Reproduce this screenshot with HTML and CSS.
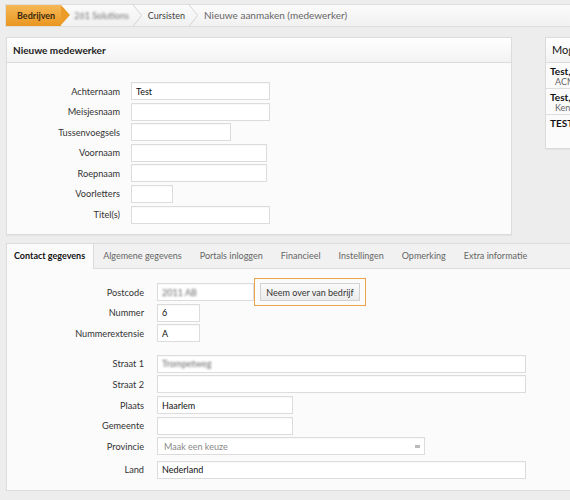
FILE: index.html
```html
<!DOCTYPE html>
<html lang="nl">
<head>
<meta charset="utf-8">
<title>Nieuwe medewerker</title>
<link rel="stylesheet" href="styles.css">
</head>
<body>
<div class="page">
  <nav class="crumbs">
    <a class="crumb crumb-home" href="#">Bedrijven</a>
    <a class="crumb crumb-blur" href="#">261 Solutions</a>
    <svg class="sep" viewBox="0 0 10 23" width="10" height="23"><polyline points="0.5,0 9.5,11.5 0.5,23" fill="none" stroke="#d4d4d4" stroke-width="1"/></svg>
    <a class="crumb" href="#">Cursisten</a>
    <svg class="sep" viewBox="0 0 10 23" width="10" height="23"><polyline points="0.5,0 9.5,11.5 0.5,23" fill="none" stroke="#d4d4d4" stroke-width="1"/></svg>
    <span class="crumb crumb-current">Nieuwe aanmaken (medewerker)</span>
  </nav>

  <div class="top">
    <section class="panel person">
      <header class="panel-head">Nieuwe medewerker</header>
      <div class="form person-form">
        <label>Achternaam</label><input class="w139" type="text" value="Test">
        <label>Meisjesnaam</label><input class="w139" type="text">
        <label>Tussenvoegsels</label><input class="w100" type="text">
        <label>Voornaam</label><input class="w136" type="text">
        <label>Roepnaam</label><input class="w136" type="text">
        <label>Voorletters</label><input class="w42" type="text">
        <label>Titel(s)</label><input class="w139" type="text">
      </div>
    </section>

    <aside class="panel matches">
      <header class="panel-head panel-head-light">Mogelijke dubbelen</header>
      <ul class="match-list">
        <li><b>Test, Jan</b><span>ACME Opleidingen</span></li>
        <li><b>Test, Piet</b><span>Kennisinstituut</span></li>
        <li><b>TEST, Karel</b><span></span></li>
      </ul>
    </aside>
  </div>

  <section class="panel tabs-panel">
    <ul class="tabs">
      <li class="active">Contact gegevens</li>
      <li>Algemene gegevens</li>
      <li>Portals inloggen</li>
      <li>Financieel</li>
      <li>Instellingen</li>
      <li>Opmerking</li>
      <li>Extra informatie</li>
    </ul>
    <div class="form contact-form">
      <label>Postcode</label>
      <div class="inline">
        <div class="fake-input w97"><span class="blurred">2011 AB</span></div>
        <div class="highlight"><button type="button" class="btn">Neem over van bedrijf</button></div>
      </div>
      <label>Nummer</label><input class="w43" type="text" value="6">
      <label>Nummerextensie</label><input class="w43" type="text" value="A">
      <div class="spacer"></div>
      <label>Straat 1</label><div class="fake-input w369"><span class="blurred">Trompetweg</span></div>
      <label>Straat 2</label><input class="w369" type="text">
      <label>Plaats</label><input class="w136" type="text" value="Haarlem">
      <label>Gemeente</label><input class="w136" type="text">
      <label>Provincie</label>
      <div class="select w268"><span>Maak een keuze</span><i class="caret"></i></div>
      <label class="land">Land</label><input class="w369 land" type="text" value="Nederland">
    </div>
  </section>
</div>
</body>
</html>
```

FILE: styles.css
```css
* { box-sizing: border-box; }

html, body {
  margin: 0;
  padding: 0;
  overflow: hidden;
}

body {
  background: #ededed;
  font-family: Lato, "Open Sans", "Liberation Sans", sans-serif;
  font-size: 9px;
  color: #333;
}

.page {
  width: 780px;
  padding: 4px 0 0 4px;
}

/* breadcrumb bar */
.crumbs {
  display: flex;
  align-items: center;
  height: 23px;
  margin-left: 1px;
  border: 1px solid #dedede;
  background: linear-gradient(#fbfbfb, #f1f1f1);
  overflow: hidden;
}

.crumb {
  color: #444;
  font-size: 9px;
  text-decoration: none;
  line-height: 21px;
}

.crumb-home {
  position: relative;
  height: 21px;
  padding: 0 6px 0 11px;
  font-weight: bold;
  color: #3a2a10;
  background: linear-gradient(#f6b857, #e9961f);
}

.crumb-home::after {
  content: "";
  position: absolute;
  right: -9px;
  top: 0;
  border-style: solid;
  border-width: 10.5px 0 10.5px 9px;
  border-color: transparent transparent transparent #eb9b27;
}

.crumb-blur {
  color: #777;
  filter: blur(1.1px);
  margin-left: 13px;
}

.sep {
  display: block;
  margin: 0 6px 0 3px;
}

.crumb-current {
  color: #666;
  font-size: 10px;
}

/* top row: employee form and duplicates */
.top {
  display: flex;
  gap: 33px;
  margin-top: 10px;
  margin-left: 2px;
}

.panel {
  background: #fbfbfb;
  border: 1px solid #dcdcdc;
  box-shadow: 0 1px 1px rgba(0, 0, 0, 0.04);
}

.panel-head {
  height: 25px;
  line-height: 24px;
  padding: 0 6px;
  font-size: 10px;
  font-weight: bold;
  color: #222;
  background: linear-gradient(#ffffff, #f3f3f3);
  border-bottom: 1px solid #dcdcdc;
}

.panel-head-light {
  font-size: 11px;
  font-weight: normal;
  color: #111;
}

.person {
  width: 506px;
  height: 198px;
}

.matches {
  width: 200px;
  height: 112px;
}

.match-list {
  list-style: none;
  margin: 0;
  padding: 0;
}

.match-list li {
  height: 26px;
  padding: 3px 4px 0;
  border-bottom: 1px solid #dedede;
  line-height: 10px;
}

.match-list li:last-child {
  border-bottom: 0;
}

.match-list b {
  display: block;
  font-size: 10px;
  color: #111;
}

.match-list span {
  display: block;
  padding-left: 5px;
  font-size: 9px;
  line-height: 12px;
  color: #666;
}

/* forms */
.form {
  display: grid;
  align-items: center;
  justify-items: start;
}

.form label {
  justify-self: end;
  color: #333;
  font-size: 9.2px;
}

input,
.fake-input,
.select {
  height: 18px;
  padding: 0 4px;
  border: 1px solid #dcdcdc;
  background: #fff;
  font-family: inherit;
  font-size: 9px;
  color: #111;
  box-shadow: inset 0 1px 1px rgba(0, 0, 0, 0.03);
  outline: none;
}

.fake-input {
  display: flex;
  align-items: center;
}

.person-form {
  grid-template-columns: 113px 1fr;
  column-gap: 11px;
  row-gap: 2.6px;
  padding: 19px 0 0;
}

.contact-form {
  grid-template-columns: 137px 1fr;
  column-gap: 13px;
  row-gap: 2.6px;
  padding: 14px 0 12px;
}

.spacer {
  grid-column: 1 / -1;
  height: 7.5px;
}

.contact-form .land {
  margin-top: 3px;
}

.w42 { width: 42px; }
.w43 { width: 43px; }
.w97 { width: 97px; }
.w100 { width: 100px; }
.w136 { width: 136px; }
.w139 { width: 139px; }
.w268 { width: 268px; }
.w369 { width: 369px; }

.blurred {
  color: #666;
  filter: blur(1.1px);
}

.inline {
  display: flex;
  align-items: center;
}

/* orange focus ring drawn around the copy button */
.highlight {
  margin: -5px 0;
  padding: 4px 5px;
  border: 1px solid #eea54a;
}

.btn {
  display: block;
  height: 18px;
  width: 100px;
  padding: 0;
  border: 1px solid #d2d2d2;
  background: linear-gradient(#fafafa, #ececec);
  font-family: inherit;
  font-size: 9px;
  color: #333;
}

.select {
  display: flex;
  align-items: center;
  justify-content: space-between;
  color: #888;
  padding: 0 4px 0 6px;
}

.caret {
  width: 5px;
  height: 3px;
  background: #bbb;
}

/* tabbed panel */
.tabs-panel {
  width: 800px;
  margin: 8px 0 0 2px;
  height: 248px;
}

.tabs {
  display: flex;
  list-style: none;
  margin: 0;
  padding: 0;
  height: 25px;
  background: #f1f1f1;
  border-bottom: 1px solid #dcdcdc;
}

.tabs li {
  padding: 0 9px;
  line-height: 24px;
  font-size: 9px;
  color: #666;
}

.tabs li.active {
  padding: 0 8px 0 7px;
  color: #111;
  font-weight: bold;
  background: #fbfbfb;
  border-right: 1px solid #dcdcdc;
  height: 25px;
}
```
